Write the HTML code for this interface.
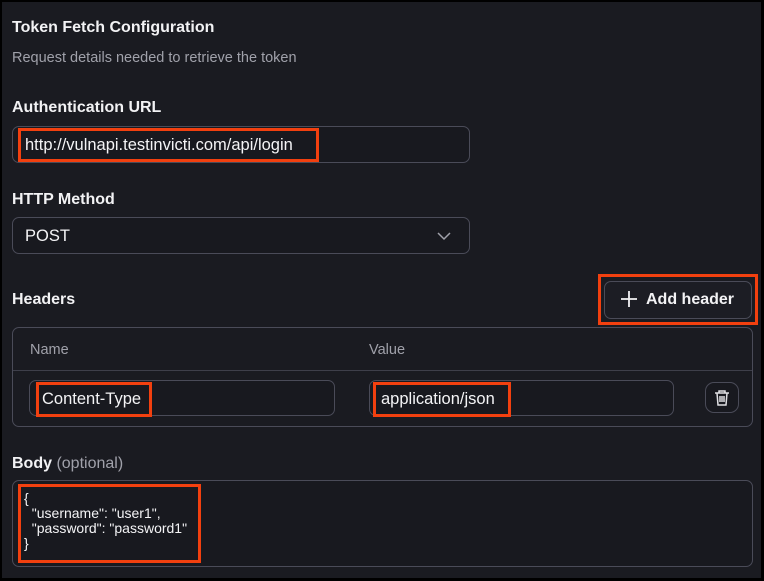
<!DOCTYPE html><html><head><style>
body{margin:0;width:764px;height:581px;background:#000;font-family:"Liberation Sans",sans-serif;overflow:hidden}
.p{position:absolute;left:2px;top:2px;width:759px;height:576px;background:#1a1b21}
.a{position:absolute}
.t{color:#f2f2f4;font-weight:bold;font-size:16px}
.r{position:absolute;border:3px solid #f2400f;box-sizing:border-box}
.in{position:absolute;border:1px solid #4a4b58;border-radius:7px;box-sizing:border-box;background:#18191f}
.tx{position:absolute;color:#f4f4f6;font-size:16.5px}
</style></head><body><div class="p"></div>
<div class="a t" style="left:12px;top:19px">Token Fetch Configuration</div>
<div class="a" style="left:12px;top:50px;color:#a0a1aa;font-size:14.5px">Request details needed to retrieve the token</div>
<div class="a t" style="left:12px;top:99px">Authentication URL</div>
<div class="in" style="left:12px;top:126px;width:458px;height:37px"></div>
<div class="tx" style="left:25px;top:136px">http://vulnapi.testinvicti.com/api/login</div>
<div class="r" style="left:18px;top:128px;width:301px;height:34px"></div>
<div class="a t" style="left:12px;top:191px">HTTP Method</div>
<div class="in" style="left:12px;top:217px;width:458px;height:37px"></div>
<div class="tx" style="left:25px;top:227px">POST</div>
<svg class="a" style="left:436px;top:230px" width="16" height="12"><path d="M2 3l6 6 6-6" stroke="#a0a1aa" stroke-width="1.5" fill="none"/></svg>
<div class="a t" style="left:12px;top:291px">Headers</div>
<div class="in" style="left:604px;top:281px;width:148px;height:38px;background:#1c1d24"></div>
<svg class="a" style="left:620px;top:290px" width="18" height="18"><path d="M9 1v16M1 9h16" stroke="#f2f2f4" stroke-width="1.8"/></svg>
<div class="a t" style="left:646px;top:291px">Add header</div>
<div class="r" style="left:598px;top:274px;width:160px;height:51px"></div>
<div class="in" style="left:12px;top:327px;width:741px;height:100px;border-radius:7px;background:#1a1b21"></div>
<div class="a" style="left:13px;top:370px;width:739px;height:1px;background:#3e3f4a"></div>
<div class="a" style="left:30px;top:342px;color:#a0a1aa;font-size:14.5px">Name</div>
<div class="a" style="left:369px;top:342px;color:#a0a1aa;font-size:14.5px">Value</div>
<div class="in" style="left:29px;top:380px;width:306px;height:36px"></div>
<div class="in" style="left:369px;top:380px;width:305px;height:36px"></div>
<div class="tx" style="left:42px;top:390px">Content-Type</div>
<div class="tx" style="left:381px;top:390px">application/json</div>
<div class="r" style="left:36px;top:382px;width:116px;height:35px"></div>
<div class="r" style="left:373px;top:382px;width:138px;height:35px"></div>
<div class="in" style="left:705px;top:382px;width:34px;height:31px;border-radius:9px"></div>
<svg class="a" style="left:713px;top:389px" width="18" height="18"><path d="M2 4h14M6 4V2h6v2M4 4l1 12h8l1-12M7 7v6M9 7v6M11 7v6" stroke="#e0e0e4" stroke-width="1.5" fill="none"/></svg>
<div class="a" style="left:12px;top:455px;font-size:16px;color:#a0a1aa"><b style="color:#f2f2f4">Body</b> (optional)</div>
<div class="in" style="left:12px;top:480px;width:741px;height:87px"></div>
<div class="a" style="left:24px;top:491px;color:#f4f4f6;font-size:14px;line-height:15px;white-space:pre">{
  "username": "user1",
  "password": "password1"
}</div>
<div class="r" style="left:18px;top:484px;width:183px;height:79px"></div>
</body></html>
